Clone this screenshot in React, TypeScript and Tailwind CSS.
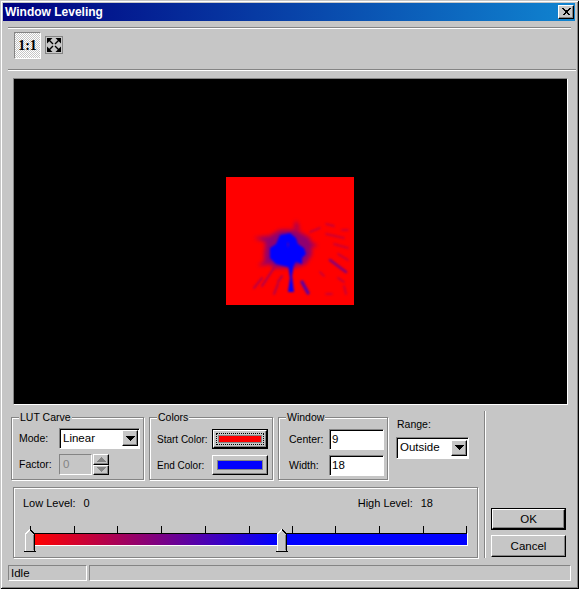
import React from "react";

const etched = "border border-[#848484] shadow-[1px_1px_0_#fff,inset_1px_1px_0_#fff]";
const sunken = "shadow-[inset_1px_1px_0_#848484,inset_2px_2px_0_#000,1px_1px_0_#fff]";
const raised = "border border-t-white border-l-white border-b-black border-r-black shadow-[inset_-1px_-1px_0_#848484]";

function Sep({ w }: { w: string }) {
  return <div className={`h-[2px] ml-[5px] border-t border-t-[#848484] border-b border-b-white ${w}`} />;
}

function Group({ label, className, children }: { label: string; className: string; children: React.ReactNode }) {
  return (
    <div className={`relative h-[63px] ${etched} ${className}`}>
      <span className="absolute left-[7px] top-[-7px] bg-[#c6c6c6] px-[1px] leading-[13px]">{label}</span>
      {children}
    </div>
  );
}

function Arrow({ up, dim }: { up?: boolean; dim?: boolean }) {
  return (
    <svg width="9" height="5" viewBox="0 0 9 5" shapeRendering="crispEdges">
      <polygon points={up ? "4.5,0 9,5 0,5" : "0,0 9,0 4.5,5"} fill={dim ? "#848484" : "#000"} />
    </svg>
  );
}

function Combo({ value, className }: { value: string; className: string }) {
  return (
    <div className={`relative flex items-center bg-white ${sunken} ${className}`}>
      <span className="pl-[4px] pt-[1px] flex-1">{value}</span>
      <div className={`mr-[1px] w-[16px] h-[16px] flex items-center justify-center bg-[#c6c6c6] ${raised}`}>
        <Arrow />
      </div>
    </div>
  );
}

function Edit({ value }: { value: string }) {
  return <div className={`w-[54px] h-[20px] flex items-center pl-[3px] pt-[1px] bg-white text-[11.5px] ${sunken}`}>{value}</div>;
}

function ColorRow({ label, color, active }: { label: string; color: string; active?: boolean }) {
  return (
    <div className="flex items-center h-[20px]">
      <span className="w-[55px] pl-[7px] pt-[1px] shrink-0 whitespace-nowrap text-[10px]">{label}</span>
      <div className={`ml-[7px] w-[56px] h-[20px] bg-[#c6c6c6] ${active ? "border border-black" : ""}`}>
        <div className={`w-full h-full flex items-center justify-center ${raised}`}>
          <div className={active ? "border border-dotted border-black p-[1px]" : ""}>
            <div className={`${active ? "w-[44px] h-[8px]" : "w-[46px] h-[10px]"} border border-[#848484]`} style={{ background: color }} />
          </div>
        </div>
      </div>
    </div>
  );
}

function Thumb({ className }: { className: string }) {
  return (
    <svg className={`absolute ${className}`} width="12" height="24" viewBox="0 0 12 24" shapeRendering="crispEdges">
      <polygon points="1,23 1,6 6,1 11,6 11,23" fill="#c6c6c6" />
      <path d="M1.5 23V6L6 1.5" stroke="#fff" fill="none" />
      <path d="M6 1.5L10.5 6V23" stroke="#000" fill="none" />
      <path d="M9.5 6.5V22" stroke="#848484" fill="none" />
      <path d="M0 23.5H12" stroke="#000" />
    </svg>
  );
}

const ticks = [5, 49, 92, 136, 180, 224, 267, 310, 354, 398, 441];

function Scan() {
  return (
    <svg width="128" height="128" viewBox="0 0 128 128" className="block">
      <defs>
        <filter id="b1" x="-50%" y="-50%" width="200%" height="200%"><feGaussianBlur stdDeviation="0.9" /></filter>
        <filter id="b2" x="-50%" y="-50%" width="200%" height="200%"><feGaussianBlur stdDeviation="2" /></filter>
      </defs>
      <rect width="128" height="128" fill="#f00" />
      <g transform="translate(-2 -1)">
        <g filter="url(#b2)" fill="#6000a0" opacity="0.7">
          <path d="M42 62L56 54L72 54L86 62L88 78L82 88L70 92L50 92L40 82Z" />
          <path d="M44 60L30 62L42 66ZM80 62L94 70L80 72ZM44 82L34 90L46 88ZM70 52L72 44L76 54Z" />
        </g>
        <g filter="url(#b1)" fill="none" stroke="#5000b0" strokeLinecap="round">
          <path d="M106 84L122 96" strokeWidth="2.6" opacity=".75" />
          <path d="M114 78L124 84M110 68L124 72M102 58L120 62M86 56L96 52M102 48L110 50M118 54L124 54M114 102L120 106M120 110L122 118M102 118L108 118M96 96L100 100" strokeWidth="1.6" opacity=".4" />
          <path d="M50 92L38 110M38 102L30 112M54 108L50 118M58 100L54 106" strokeWidth="1.8" opacity=".5" />
          <path d="M78 106L84 117" strokeWidth="3.4" opacity=".95" />
        </g>
        <g filter="url(#b1)" fill="#0000ff">
          <path d="M56 59L66 57L72 62L74 68L80 72L82 78L78 82L78 88L72 86L68 92L60 90L52 88L46 82L46 72L52 68Z" />
          <path d="M64 88L70 88L68 100L70 116L64 116L66 102Z" />
        </g>
        <path d="M63 66L65 68L64 72Z" fill="#6000a0" filter="url(#b1)" />
      </g>
    </svg>
  );
}

export default function App() {
  return (
    <div
      className="w-[579px] h-[589px] p-[3px] bg-[#c6c6c6] text-black text-[10.5px] overflow-hidden shadow-[inset_1px_1px_0_#c6c6c6,inset_-1px_-1px_0_#000,inset_2px_2px_0_#fff,inset_-2px_-2px_0_#848484]"
      style={{ fontFamily: '"Liberation Sans", Arial, sans-serif' }}
    >
      <div className="h-[18px] w-[572px] flex items-center justify-between pl-[2px] pr-[1px] bg-[linear-gradient(90deg,#000080,#1084d0)]">
        <span className="text-white font-bold text-[12px] leading-none">Window Leveling</span>
        <div className={`w-[16px] h-[14px] flex items-center justify-center bg-[#c6c6c6] ${raised}`}>
          <svg width="9" height="8" viewBox="0 0 9 8" shapeRendering="crispEdges">
            <path d="M0 0h2v1h1v1h3v-1h1v-1h2v1h-1v1h-1v1h-1v2h1v1h1v1h-2v-1h-1v-1h-1v1h-1v1h-2v-1h1v-1h1v-2h-1v-1h-1z" fill="#000" />
          </svg>
        </div>
      </div>

      <div className="mt-[6px]"><Sep w="w-[563px]" /></div>
      <div className="h-[40px] pl-[11px] flex items-start">
        <div className="mt-[3px] w-[27px] h-[27px] flex items-center justify-center border border-t-[#848484] border-l-[#848484] border-b-white border-r-white bg-[repeating-conic-gradient(#fff_0_25%,#c6c6c6_0_50%)] bg-[length:2px_2px] text-[14px] font-bold leading-none" style={{ fontFamily: '"Liberation Serif", serif' }}>
          1:1
        </div>
        <div className="mt-[7px] ml-[4px] w-[18px] h-[18px] border border-[#848484] flex items-center justify-center">
          <svg width="14" height="14" viewBox="0 0 14 14" fill="#000" stroke="#000">
            <g strokeWidth="0">
              <polygon points="0,0 5.5,0 0,5.5" />
              <polygon points="14,0 8.5,0 14,5.5" />
              <polygon points="0,14 5.5,14 0,8.5" />
              <polygon points="14,14 8.5,14 14,8.5" />
            </g>
            <path d="M2 2L6 6M12 2L8 6M2 12L6 8M12 12L8 8" strokeWidth="1.4" fill="none" />
          </svg>
        </div>
      </div>
      <Sep w="w-[568px]" />

      <div className="mt-[7px] ml-[10px] w-[555px] h-[327px] bg-black border border-t-[#848484] border-l-[#848484] border-b-white border-r-white flex justify-center">
        <div className="mt-[98px] mr-[2px]"><Scan /></div>
      </div>

      <div className="mt-[6px] ml-[8px] flex h-[147px]">
        <div className="w-[467px]">
          <div className="flex gap-[5px] pt-[6px]">
            <Group label="LUT Carve" className="w-[133px]">
              <div className="flex items-center mt-[10px] h-[20px]">
                <span className="pl-[7px] pt-[1px] w-[47px]">Mode:</span>
                <Combo value="Linear" className="w-[80px] h-[20px] text-[11.5px]" />
              </div>
              <div className="flex items-center mt-[6px] h-[21px]">
                <span className="pl-[7px] pt-[1px] w-[47px]">Factor:</span>
                <div className="w-[33px] h-[21px] flex items-center pl-[3px] text-[#848484] text-[11.5px] border border-t-[#848484] border-l-[#848484] border-b-white border-r-white">0</div>
                <div className="ml-[1px] w-[16px] h-[21px] flex flex-col">
                  <div className={`flex-1 flex items-center justify-center ${raised}`}><Arrow up dim /></div>
                  <div className={`flex-1 flex items-center justify-center ${raised}`}><Arrow dim /></div>
                </div>
              </div>
            </Group>
            <Group label="Colors" className="w-[124px]">
              <div className="mt-[11px]"><ColorRow label="Start Color:" color="#f00" active /></div>
              <div className="mt-[6px]"><ColorRow label="End Color:" color="#00f" /></div>
            </Group>
            <Group label="Window" className="w-[110px]">
              <div className="flex items-center mt-[11px]">
                <span className="pl-[10px] pt-[1px] w-[50px]">Center:</span>
                <Edit value="9" />
              </div>
              <div className="flex items-center mt-[6px]">
                <span className="pl-[10px] pt-[1px] w-[50px]">Width:</span>
                <Edit value="18" />
              </div>
            </Group>
            <div className="ml-[3px]">
              <div className="pl-[1px] mt-[1px] leading-[13px]">Range:</div>
              <Combo value="Outside" className="mt-[6px] w-[72px] h-[21px] text-[11.5px]" />
            </div>
          </div>

          <div className={`relative mt-[7px] ml-[2px] w-[465px] h-[71px] ${etched}`}>
            <div className="flex justify-between pt-[9px] pl-[9px] pr-[44px] leading-[13px] text-[11px]">
              <span className="flex gap-[8px]"><span>Low Level:</span><span>0</span></span>
              <span className="flex gap-[8px]"><span>High Level:</span><span>18</span></span>
            </div>
            <div className="mt-[23px] ml-[21px] w-[432px] h-[13px] border-t border-t-black border-b border-b-white shadow-[1px_0_0_#fff] bg-[linear-gradient(90deg,#f00_0,#00f_56%)]" />
            {ticks.map((x) => (
              <div key={x} className="absolute top-[38px] w-[1px] h-[8px] bg-black" style={{ left: x + 11 }} />
            ))}
            <Thumb className="left-[10px] top-[40px]" />
            <Thumb className="left-[262px] top-[40px]" />
          </div>
        </div>

        <div className="ml-[6px] w-[2px] h-[147px] border-l border-l-[#848484] border-r border-r-white" />

        <div className="ml-[5px] w-[75px] pt-[97px] flex flex-col gap-[5px]">
          <div className="h-[22px] border border-black bg-[#c6c6c6]">
            <div className={`h-full flex items-center justify-center pt-[1px] text-[11.5px] ${raised}`}>OK</div>
          </div>
          <div className={`h-[22px] flex items-center justify-center pt-[1px] text-[11.5px] ${raised}`}>Cancel</div>
        </div>
      </div>

      <div className="mt-[7px] ml-[5px] flex gap-[2px] text-[11.5px]">
        <div className="w-[79px] h-[16px] pl-[2px] leading-[14px] border border-t-[#848484] border-l-[#848484] border-b-white border-r-white">Idle</div>
        <div className="w-[482px] h-[16px] border border-t-[#848484] border-l-[#848484] border-b-white border-r-white" />
      </div>
    </div>
  );
}
